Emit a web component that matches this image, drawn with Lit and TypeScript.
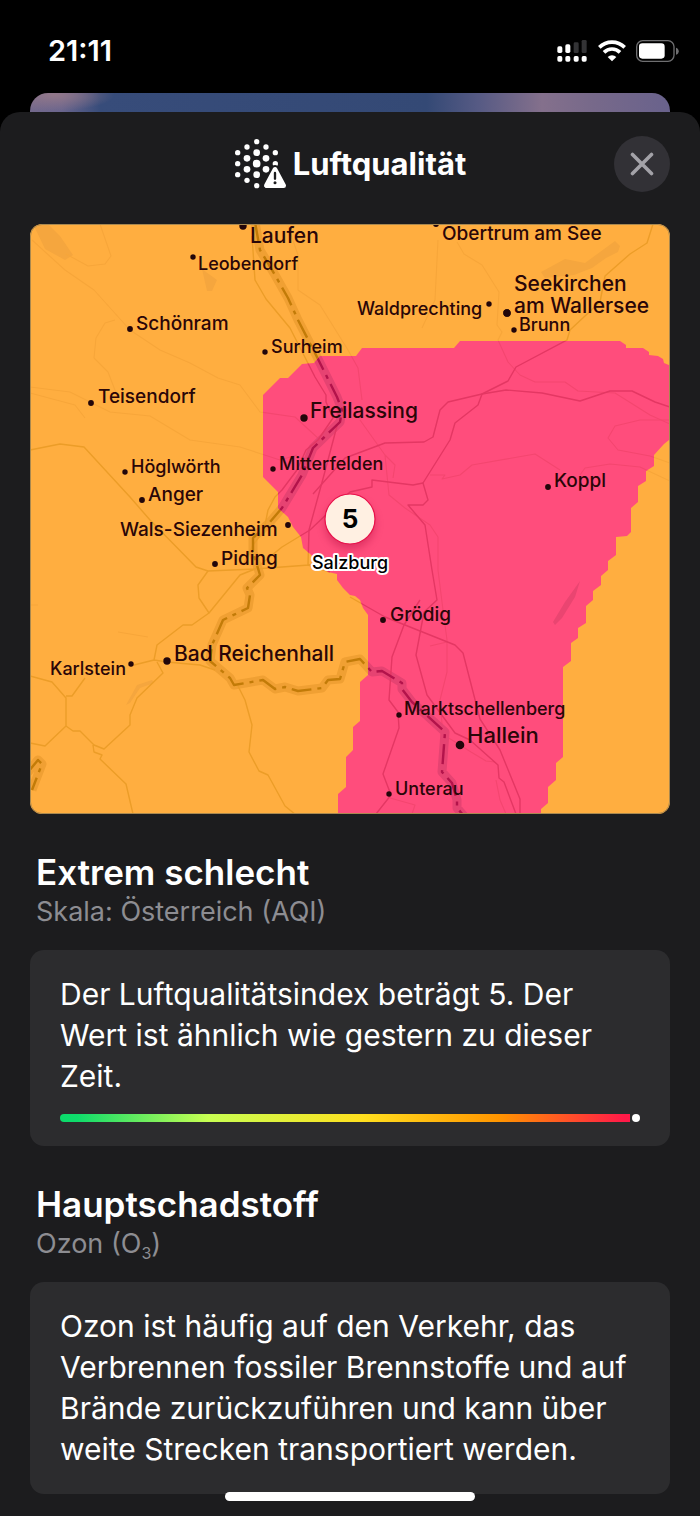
import { LitElement, html, svg, css } from "lit";
import { customElement } from "lit/decorators.js";

type Size = "s" | "m" | "l" | "xl";

interface Place {
  name: string;
  x: number;
  y: number;
  size: Size;
  dot: [number, number];
}

const PLACES: Place[] = [
  { name: "Laufen", x: 250, y: 243, size: "l", dot: [243, 226] },
  { name: "Leobendorf", x: 198, y: 270, size: "s", dot: [193, 257] },
  { name: "Obertrum am See", x: 442, y: 240, size: "m", dot: [436, 224] },
  { name: "Seekirchen", x: 514, y: 291, size: "l", dot: [507, 313] },
  { name: "am Wallersee", x: 514, y: 313, size: "l", dot: [507, 313] },
  { name: "Waldprechting", x: 357, y: 315, size: "s", dot: [489, 304] },
  { name: "Brunn", x: 519, y: 331, size: "s", dot: [514, 330] },
  { name: "Schönram", x: 136, y: 330, size: "m", dot: [130, 329] },
  { name: "Surheim", x: 271, y: 353, size: "s", dot: [265, 352] },
  { name: "Teisendorf", x: 98, y: 403, size: "m", dot: [91, 403] },
  { name: "Freilassing", x: 310, y: 418, size: "l", dot: [304, 418] },
  { name: "Mitterfelden", x: 279, y: 470, size: "s", dot: [273, 469] },
  { name: "Koppl", x: 554, y: 487, size: "m", dot: [548, 487] },
  { name: "Höglwörth", x: 131, y: 473, size: "s", dot: [125, 472] },
  { name: "Anger", x: 148, y: 501, size: "m", dot: [142, 500] },
  { name: "Wals-Siezenheim", x: 120, y: 536, size: "m", dot: [288, 525] },
  { name: "Piding", x: 221, y: 565, size: "m", dot: [215, 564] },
  { name: "Grödig", x: 390, y: 621, size: "m", dot: [383, 620] },
  { name: "Bad Reichenhall", x: 174, y: 661, size: "l", dot: [167, 661] },
  { name: "Karlstein", x: 50, y: 675, size: "s", dot: [131, 664] },
  { name: "Marktschellenberg", x: 404, y: 715, size: "s", dot: [399, 715] },
  { name: "Hallein", x: 467, y: 743, size: "xl", dot: [460, 745] },
  { name: "Unterau", x: 395, y: 795, size: "s", dot: [389, 794] },
];

const DOT_RADIUS: Record<Size, number> = { s: 2.7, m: 2.9, l: 3.7, xl: 4.3 };

const ZONE =
  "M263 395 280 378H288L302 364 314 363 320 356H356L362 348H454L460 341H620L626 345V348H643L649 352V355L658 356 663 359 664 363 671 366V432L669 440 664 444 654 455V466L646 471V481L638 486V502L631 508V532L627 536 616 537V555L608 561V570L601 576V585L593 591V600L586 606V623L578 628V638L571 643V661L563 667V757L556 763V780L548 787V803L541 809V815H338V794L346 787V757L353 750V727L360 721V682L368 675V615L363 608 360 600 355 596 350 595 343 588 337 580V574L328 572 322 565 309 553 303 548 301 537 293 527 288 517 278 508V492L268 482 263 477Z";

const BORDER =
  "M255 222 260 250 275 275 288 298 298 320 317 357 337 397 342 410 340 422 313 448 302 475 282 508 270 522 253 538 253 552 260 575 247 588 250 595 248 608 223 620 212 645 210 661 230 678 234 685 263 680 275 689 285 687 298 691 322 688 328 680 340 679 345 662 360 659 372 672 382 671 402 683 402 689 412 702 445 732 442 772 452 783 457 800V808L464 816M28 772 38 760 42 764 32 790";

const ROADS = [
  "M30 450 60 444 84 447 130 497 150 520 196 567 208 571 255 569 309 565 345 558",
  "M208 571 198 585 199 598 209 613 240 575 255 569 282 547 310 530 350 492 372 487V480L413 485 423 483 428 500 423 505H408L425 525 432 570 437 600 424 612 416 655 427 695 455 733 470 740 498 765 499 778 504 782 516 814",
  "M209 613 192 625H183L157 645 154 660 167 662 200 665 215 670 M154 660 130 666 M157 662 163 673 137 698 130 715V725L104 749 94 745 80 731H73L66 726V698L52 682 30 676 M66 696H72L85 678 M66 726 45 746 30 743 M93 745 94 752 102 755 100 759 126 784 133 814",
  "M238 686 245 700 252 725 249 752 259 771 268 775 285 806 296 815",
  "M252 236 255 280 266 299 290 328 315 377 326 395V402L333 418 318 440 306 450 297 470 282 490 275 497 268 510 264 530 253 545 243 565",
  "M670 407 655 402 632 391H610L580 401 542 393 506 390 482 394 448 402 440 410 433 437 424 442 385 443 345 458 313 494",
  "M653 224 647 243 630 254 605 276 600 302 570 330 567 340 516 367 508 381 482 394 478 405 455 423 450 440 423 483",
  "M350 597 385 617 455 645 463 653 480 719 500 750 520 799V815",
  "M420 600 404 625 392 657 389 700 398 712 399 728 383 774 391 795 376 814",
  "M337 426 324 475 309 530 308 565 330 572",
];

const MINOR_ROADS = [
  "M32 240 65 270 94 290 112 310 130 330 160 350 190 363 218 378 240 385 260 412 295 417 320 440",
  "M30 387 70 392 110 412 150 416 190 440 240 447 280 460 297 455",
  "M100 224 111 256 105 264 88 266 66 254 M94 358 96 338 105 323 115 320 M94 358 108 372 118 398 M30 393 75 405 85 418",
  "M288 226 298 255V290L320 305 348 350 358 368 362 400",
  "M438 240 435 300 422 328 M457 242 464 254 482 265 499 292 497 325 502 332 498 340 508 362 520 375 535 382H565L578 391 615 393 650 415 670 424",
  "M360 420 385 455 395 465 393 478M385 455 389 495 405 508 430 525 438 537V570L443 610 447 640 447 672 440 700 443 735 452 740 471 752 486 761 495 762",
  "M430 475H445L442 479 460 475 472 465 535 454 560 470 M580 475 585 468 610 464 640 467 670 481 M670 420 640 420 615 426 608 438 618 450 650 456 670 463",
  "M496 780 500 800 506 814 M390 798 415 805 412 814 M430 646 447 642 M30 605H38 M118 632 148 637",
];

const LAKES = [
  "M34 226 48 224 60 236 73 255 65 260 45 249Z",
  "M202 269 217 280 212 291H207Z",
  "M541 272 565 259 585 263 615 241 620 246 618 252 606 258 592 268 574 275 545 278Z",
  "M580 581 575 597 562 618 555 625 553 622 565 602Z",
  "M152 680 137 685 126 705 130 703 140 688 154 683Z",
];

@customElement("air-map")
export class AirMap extends LitElement {
  static styles = css`
    :host {
      display: block;
    }
    .map {
      display: block;
      width: 100%;
      height: auto;
      border-radius: 12px;
      background: #ffae40;
      font-family: Inter, "Liberation Sans", sans-serif;
    }
    .zone-fill {
      fill: #ff4d7c;
    }
    .line {
      fill: none;
      stroke-linejoin: round;
    }
    .orange {
      --road: #ec9d28;
      --minor: #f7a63a;
      --band: #f0a033;
      --dash: #c27b08;
      --lake: #f5a63e;
    }
    .pink {
      --road: #e43763;
      --minor: #f4466f;
      --band: #e64372;
      --dash: #b3134b;
      --lake: #ea4571;
    }
    .road {
      stroke: var(--road);
      stroke-width: 1.4;
    }
    .minor {
      stroke: var(--minor);
      stroke-width: 1.1;
    }
    .band {
      stroke: var(--band);
      stroke-width: 9;
    }
    .dash {
      stroke: var(--dash);
      stroke-width: 2.4;
      stroke-dasharray: 20 6 4 6;
    }
    .lake {
      fill: var(--lake);
    }
    .place {
      fill: #2a0608;
      font-weight: 500;
    }
    .s {
      font-size: 18px;
    }
    .m {
      font-size: 19px;
    }
    .l {
      font-size: 21px;
    }
    .xl {
      font-size: 22px;
    }
    .dot {
      fill: #22060a;
    }
    .pin-shadow {
      fill: #a00032;
      opacity: 0.35;
      filter: blur(4px);
    }
    .pin {
      fill: #fff0e2;
      stroke: #e8104a;
      stroke-width: 1.2;
    }
    .pin-value {
      fill: #000;
      font-size: 26px;
      font-weight: 700;
      text-anchor: middle;
    }
    .pin-name {
      fill: #000;
      stroke: #fff;
      stroke-width: 4;
      stroke-linejoin: round;
      paint-order: stroke;
      font-size: 18px;
      font-weight: 500;
      text-anchor: middle;
    }
    .rim {
      fill: none;
      stroke: #a9884f;
      stroke-width: 1;
    }
  `;

  private terrain(tone: "orange" | "pink") {
    return svg`
      <g class=${tone} clip-path=${tone === "pink" ? "url(#zone)" : "none"}>
        ${LAKES.map((d) => svg`<path class="lake" d=${d} />`)}
        ${MINOR_ROADS.map((d) => svg`<path class="line minor" d=${d} />`)}
        <path class="line band" d=${BORDER} />
        ${ROADS.map((d) => svg`<path class="line road" d=${d} />`)}
        <path class="line dash" d=${BORDER} />
      </g>`;
  }

  render() {
    return html`
      <svg class="map" viewBox="30 224 640 590" role="img" aria-label="Karte der Luftqualität">
        <defs><clipPath id="zone"><path d=${ZONE} /></clipPath></defs>
        ${this.terrain("orange")}
        <path class="zone-fill" d=${ZONE} />
        ${this.terrain("pink")}
        ${PLACES.map(
          (p) => svg`
            <circle class="dot" cx=${p.dot[0]} cy=${p.dot[1]} r=${DOT_RADIUS[p.size]} />
            <text class="place ${p.size}" x=${p.x} y=${p.y}>${p.name}</text>`
        )}
        <circle class="pin-shadow" cx="350" cy="524" r="25" />
        <circle class="pin" cx="350" cy="519" r="25" />
        <text class="pin-value" x="350" y="528">5</text>
        <text class="pin-name" x="350" y="569">Salzburg</text>
        <rect class="rim" x="30.5" y="224.5" width="639" height="589" rx="11.5" />
      </svg>
    `;
  }
}

@customElement("app-root")
export class AppRoot extends LitElement {
  static styles = css`
    :host {
      display: flex;
      flex-direction: column;
      min-height: 100vh;
      background: #000;
      color: #fff;
      font-family: Inter, "Liberation Sans", sans-serif;
    }
    .status {
      display: flex;
      align-items: center;
      justify-content: space-between;
      height: 93px;
      box-sizing: border-box;
      padding: 9px 21px 0 48px;
    }
    .time {
      font-size: 29px;
      line-height: 32px;
      font-weight: 600;
    }
    .indicators {
      display: flex;
      align-items: center;
      gap: 10px;
    }
    .behind {
      height: 38px;
      margin: 0 30px -19px;
      border-radius: 18px;
      background:
        radial-gradient(ellipse 60px 16px at 24px 2px, #93788a, transparent),
        linear-gradient(90deg, #74698c 0, #6a658d 5%, #374c7a 11%, #344975 62%, #565a84 70%, #84708c 80%, #77698a 88%, #69628c 100%);
    }
    .sheet {
      position: relative;
      flex: 1;
      box-sizing: border-box;
      padding: 24px 30px 21px;
      border-radius: 20px 20px 0 0;
      background: #1c1c1e;
    }
    .head {
      display: grid;
      grid-template-columns: 1fr auto 1fr;
      align-items: center;
      margin-bottom: 32px;
    }
    .title {
      grid-column: 2;
      display: flex;
      align-items: center;
      gap: 6px;
      margin: 0;
      font-size: 31px;
      line-height: 36px;
      font-weight: 700;
    }
    .close {
      justify-self: end;
      display: grid;
      place-items: center;
      width: 56px;
      height: 56px;
      padding: 0;
      border: 0;
      border-radius: 50%;
      background: #323136;
      cursor: pointer;
    }
    .section {
      margin-top: 36px;
    }
    .heading {
      margin: 0 6px;
      font-size: 35px;
      line-height: 44px;
      font-weight: 600;
    }
    .sub {
      margin: 0 6px 20px;
      color: #8d8d92;
      font-size: 27px;
      line-height: 36px;
    }
    .sub sub {
      font-size: 16px;
      line-height: 0;
    }
    .card {
      padding: 24px 30px;
      border-radius: 14px;
      background: #2c2c2e;
    }
    .text {
      margin: 0;
      font-size: 30px;
      line-height: 41px;
    }
    .scale {
      display: flex;
      align-items: center;
      gap: 2px;
      margin-top: 17px;
    }
    .bar {
      flex: 1;
      height: 8px;
      border-radius: 4px 0 0 4px;
      background: linear-gradient(90deg, #0bdb6b 0, #0fdc6b 3%, #c8ff52 26%, #ffe01f 53%, #ff9500 77%, #ff1a48 99%);
    }
    .marker {
      width: 8px;
      height: 8px;
      border-radius: 50%;
      background: #fff;
    }
    .home {
      position: fixed;
      left: 50%;
      bottom: 15px;
      width: 250px;
      height: 9px;
      margin-left: -125px;
      border-radius: 5px;
      background: #fff;
    }
  `;

  render() {
    return html`
      <header class="status">
        <span class="time">21:11</span>
        <div class="indicators">
          <svg width="31" height="22" viewBox="0 0 93 66" fill="#fff" aria-label="Mobilfunk" role="img">
            <rect x="1" y="19" width="15" height="20" rx="5" />
            <rect x="25" y="13" width="15" height="26" rx="5" />
            <rect x="50" y="7" width="15" height="32" rx="4" fill="#333335" />
            <rect x="74" y="0" width="15" height="39" rx="4" fill="#333335" />
            <rect x="1" y="48" width="15" height="17" rx="5" />
            <rect x="25" y="48" width="15" height="17" rx="5" />
            <rect x="50" y="48" width="15" height="17" rx="5" />
            <rect x="74" y="48" width="15" height="17" rx="5" />
          </svg>
          <svg width="28" height="22" viewBox="0 0 84 66" fill="none" stroke="#fff" stroke-width="11" aria-label="WLAN" role="img">
            <path d="M4 22a54 54 0 0 1 76 0" />
            <path d="M18 37a34 34 0 0 1 48 0" />
            <path d="M42 64 29 51a18 18 0 0 1 26 0Z" fill="#fff" stroke="none" />
          </svg>
          <svg width="43" height="22" viewBox="0 0 129 66" aria-label="Batterie" role="img">
            <rect x="2" y="2" width="112" height="62" rx="18" fill="none" stroke="#6f6f71" stroke-width="4" />
            <rect x="9" y="10" width="77" height="46" rx="10" fill="#fff" />
            <path d="M120 23c11 3 11 18 0 21Z" fill="#6f6f71" />
          </svg>
        </div>
      </header>
      <div class="behind"></div>
      <main class="sheet">
        <div class="head">
          <h1 class="title">
            <svg width="53" height="52" viewBox="704 414 159 156" fill="#fff" aria-hidden="true">
              <circle cx="772" cy="425" r="8" />
              <circle cx="772" cy="458" r="10" />
              <circle cx="772" cy="491" r="11.5" />
              <circle cx="772" cy="524" r="10" />
              <circle cx="772" cy="557" r="8" />
              <circle cx="743" cy="441" r="8" />
              <circle cx="743" cy="475" r="10" />
              <circle cx="743" cy="508" r="10" />
              <circle cx="743" cy="541" r="8" />
              <circle cx="715" cy="458" r="8" />
              <circle cx="715" cy="491" r="8" />
              <circle cx="715" cy="524" r="8" />
              <circle cx="800" cy="441" r="8" />
              <circle cx="800" cy="475" r="10" />
              <circle cx="800" cy="508" r="10" />
              <circle cx="828" cy="458" r="8" />
              <circle cx="828" cy="491" r="8" />
              <path d="M827 508 801 557H853Z" stroke="#1c1c1e" stroke-width="26" stroke-linejoin="round" />
              <path d="M827 508 801 557H853Z" stroke="#fff" stroke-width="14" stroke-linejoin="round" />
              <path d="M827 519V536" stroke="#1c1c1e" stroke-width="7" stroke-linecap="round" />
              <circle cx="827" cy="548" r="4.5" fill="#1c1c1e" />
            </svg>
            <span>Luftqualität</span>
          </h1>
          <button class="close" type="button" aria-label="Schließen">
            <svg width="24" height="24" viewBox="0 0 24 24" stroke="#a3a2a8" stroke-width="3.6" stroke-linecap="round" aria-hidden="true">
              <path d="M2.500 2.500 21.500 21.500M21.500 2.500 2.500 21.500" />
            </svg>
          </button>
        </div>
        <air-map></air-map>
        <section class="section">
          <h2 class="heading">Extrem schlecht</h2>
          <p class="sub">Skala: Österreich (AQI)</p>
          <div class="card">
            <p class="text">Der Luftqualitätsindex beträgt 5. Der Wert ist ähnlich wie gestern zu dieser Zeit.</p>
            <div class="scale" role="meter" aria-label="Luftqualitätsindex" aria-valuemin="1" aria-valuemax="5" aria-valuenow="5">
              <div class="bar"></div>
              <div class="marker"></div>
            </div>
          </div>
        </section>
        <section class="section">
          <h2 class="heading">Hauptschadstoff</h2>
          <p class="sub">Ozon (O<sub>3</sub>)</p>
          <div class="card">
            <p class="text">Ozon ist häufig auf den Verkehr, das Verbrennen fossiler Brennstoffe und auf Brände zurückzuführen und kann über weite Strecken transportiert werden.</p>
          </div>
        </section>
      </main>
      <div class="home"></div>
    `;
  }
}
